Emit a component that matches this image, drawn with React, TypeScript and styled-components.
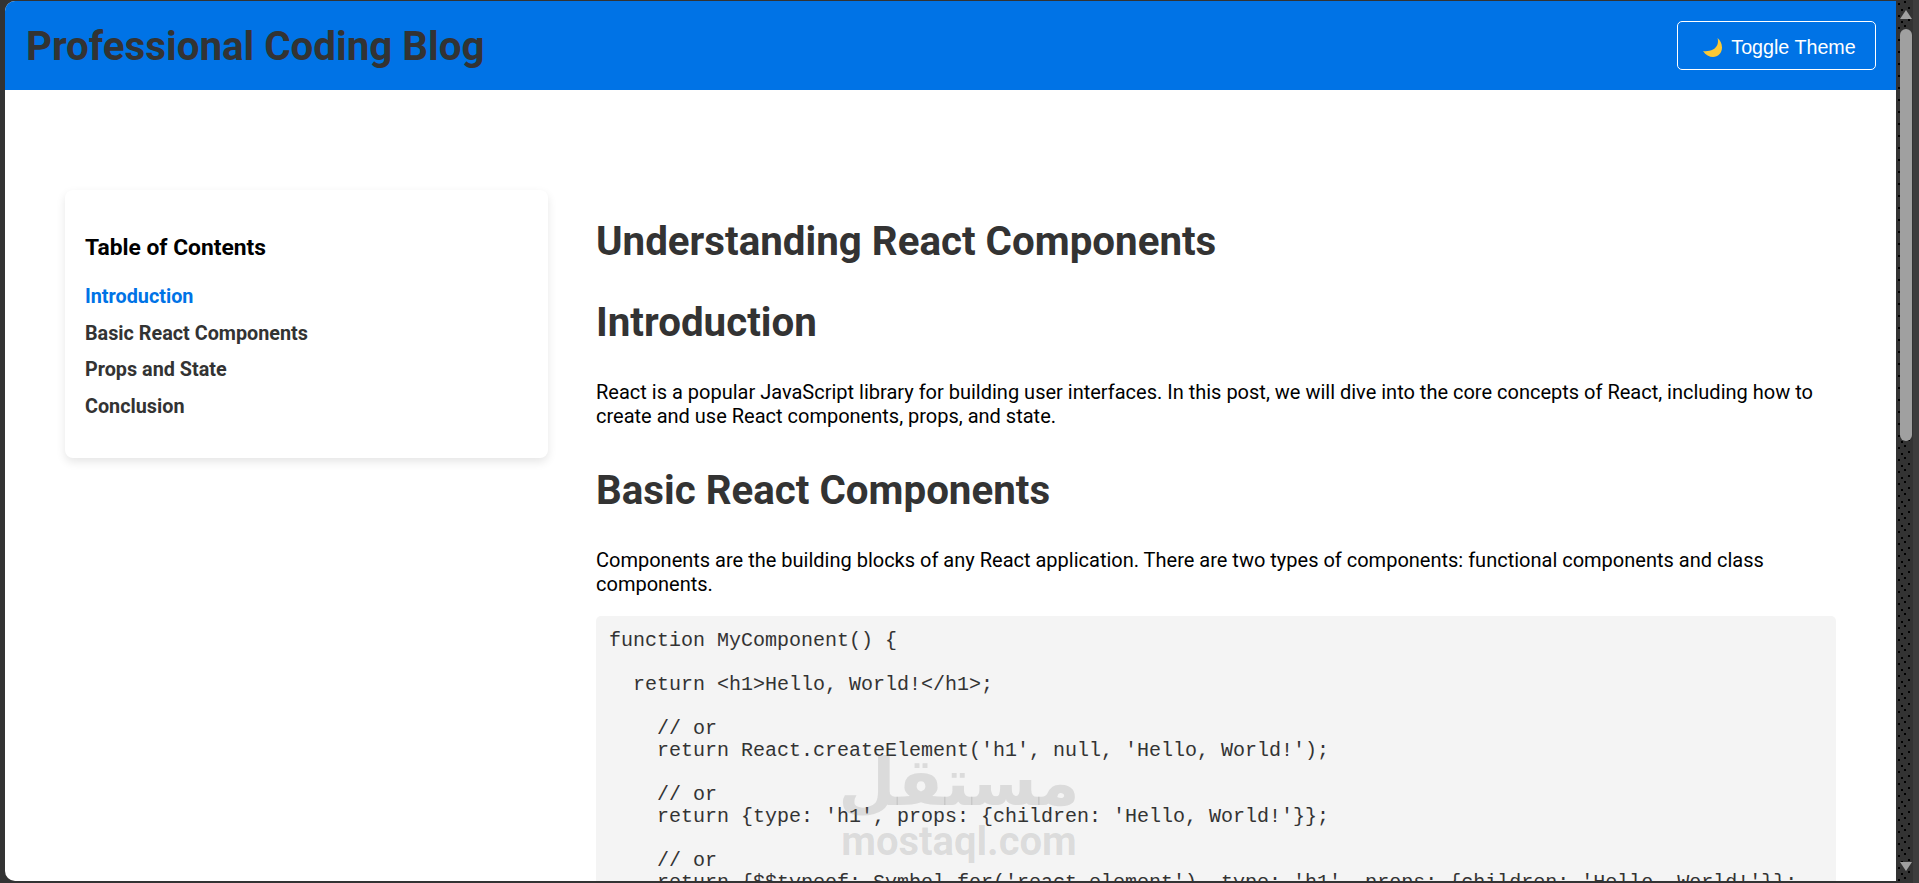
import * as React from "react";
import styled, { createGlobalStyle } from "styled-components";

const GlobalStyle = createGlobalStyle`
  html, body {
    margin: 0;
    height: 100%;
    overflow: hidden;
    background: #333;
  }
  * {
    box-sizing: border-box;
  }
`;

const Frame = styled.div`
  display: flex;
  width: 1919px;
  height: 883px;
  padding: 1px 0 2px 5px;
  background: #333;
`;

const Page = styled.div`
  position: relative;
  flex: 1;
  min-width: 0;
  background: #fff;
  border-radius: 10px 0 0 10px;
  overflow: hidden;
  font-family: Roboto, "Liberation Sans", sans-serif;
`;

const Header = styled.header`
  display: flex;
  align-items: center;
  justify-content: space-between;
  height: 89px;
  padding: 1px 20px 0 21px;
  background: #0073e6;
`;

const SiteTitle = styled.h1`
  margin: 0;
  font-size: 40.3px;
  font-weight: 700;
  color: #333;
`;

const ThemeButton = styled.button`
  display: flex;
  align-items: center;
  justify-content: center;
  gap: 9px;
  width: 199px;
  height: 49px;
  margin-top: -1px;
  padding: 4px 0 0 6px;
  border: 1px solid #fff;
  border-radius: 5px;
  background: transparent;
  color: #fff;
  font-family: "Liberation Sans", Arial, sans-serif;
  font-size: 19.7px;
`;

const Layout = styled.div`
  display: grid;
  grid-template-columns: 483px 1240px;
  column-gap: 48px;
  align-items: start;
  padding: 100px 0 0 60px;
`;

const Sidebar = styled.aside`
  padding: 20px;
  height: 268px;
  background: #fff;
  border-radius: 8px;
  box-shadow: 0 4px 10px rgba(0, 0, 0, 0.1);
`;

const SidebarTitle = styled.h3`
  margin: 25px 0 25px;
  font-size: 22.8px;
  line-height: 25px;
  font-weight: 700;
  color: #000;
`;

const TocList = styled.ul`
  margin: 0;
  padding: 0;
  list-style: none;
  display: flex;
  flex-direction: column;
`;

const TocLink = styled.a<{ $active?: boolean }>`
  display: block;
  height: 36.5px;
  font-size: 19.8px;
  line-height: 24px;
  font-weight: 700;
  text-decoration: none;
  color: ${(props) => (props.$active ? "#0073e6" : "#333")};
`;

const Article = styled.main`
  padding-top: 28px;
`;

const PostTitle = styled.h1`
  margin: 0 0 34px;
  font-size: 40.3px;
  line-height: 47px;
  font-weight: 700;
  color: #333;
`;

const SectionTitle = styled.h2`
  margin: 0 0 34px;
  font-size: 40.3px;
  line-height: 47px;
  font-weight: 700;
  color: #333;
`;

const Paragraph = styled.p`
  margin: 0 0 39px;
  font-size: 20px;
  line-height: 24px;
  color: #000;
`;

const CodeBlock = styled.pre`
  margin: -19px 0 0;
  padding: 14px 13px;
  background: #f4f4f4;
  border-radius: 5px;
  font-family: "Liberation Mono", "Courier New", monospace;
  font-size: 20px;
  line-height: 22px;
  color: #333;
`;

const Watermark = styled.div`
  position: absolute;
  left: 834px;
  top: 746px;
  width: 240px;
  display: flex;
  flex-direction: column;
  align-items: center;
  color: rgba(120, 120, 120, 0.2);
  font-weight: 700;
  pointer-events: none;
`;

const WatermarkArabic = styled.span`
  font-family: "DejaVu Sans", sans-serif;
  font-size: 66px;
  line-height: 72px;
`;

const WatermarkLatin = styled.span`
  font-family: Roboto, sans-serif;
  font-size: 40px;
  line-height: 46px;
`;

const ScrollBar = styled.div`
  position: relative;
  flex: 0 0 23px;
  display: flex;
  flex-direction: column;
  align-items: flex-start;
  padding: 10px 0 0 4px;
  margin-bottom: -2px;
  margin-top: -1px;
  background-color: #333;
  background-image:
    radial-gradient(circle at 3px 4px, #000 0.8px, transparent 1px),
    radial-gradient(circle at 9px 2px, #000 0.8px, transparent 1px),
    radial-gradient(circle at 13px 8px, #000 0.8px, transparent 1px),
    radial-gradient(circle at 6px 10px, #000 0.8px, transparent 1px);
  background-size: 17px 12px;
  background-repeat: repeat-y;
`;

const ScrollEdge = styled.div`
  position: absolute;
  top: 0;
  right: 0;
  bottom: 0;
  width: 6px;
  background: #3d3d3d;
`;

const ScrollArrow = styled.div<{ $down?: boolean }>`
  width: 12px;
  height: 9px;
  background: #a0a0a0;
  clip-path: ${(props) =>
    props.$down
      ? "polygon(0 0, 100% 0, 50% 100%)"
      : "polygon(50% 0, 100% 100%, 0 100%)"};
`;

const ScrollThumb = styled.div`
  width: 12px;
  height: 412px;
  margin-top: 10px;
  margin-bottom: 421px;
  background: #a0a0a0;
  border-radius: 6px;
`;

const Moon = () => (
  <svg width="19" height="19" viewBox="0 0 19 19">
    <path
      d="M14.500 0C16 5 14 9.500 10 11.500 7 13 3.500 13.500 0 13c2.500 4 6.500 6 10 6 5 0 9-4 9-9.500C19 5.500 17 2 14.500 0Z"
      fill="#fcc934"
    />
  </svg>
);

const code = `function MyComponent() {

  return <h1>Hello, World!</h1>;

    // or
    return React.createElement('h1', null, 'Hello, World!');

    // or
    return {type: 'h1', props: {children: 'Hello, World!'}};

    // or
    return {$$typeof: Symbol.for('react.element'), type: 'h1', props: {children: 'Hello, World!'}};
}`;

const tocItems = [
  "Introduction",
  "Basic React Components",
  "Props and State",
  "Conclusion",
];

const App = () => {
  return (
    <Frame>
      <GlobalStyle />
      <Page>
        <Header>
          <SiteTitle>Professional Coding Blog</SiteTitle>
          <ThemeButton>
            <Moon />
            Toggle Theme
          </ThemeButton>
        </Header>
        <Layout>
          <Sidebar>
            <SidebarTitle>Table of Contents</SidebarTitle>
            <TocList>
              {tocItems.map((item, index) => (
                <li key={item}>
                  <TocLink href="#" $active={index === 0}>
                    {item}
                  </TocLink>
                </li>
              ))}
            </TocList>
          </Sidebar>
          <Article>
            <PostTitle>Understanding React Components</PostTitle>
            <SectionTitle>Introduction</SectionTitle>
            <Paragraph>
              React is a popular JavaScript library for building user
              interfaces. In this post, we will dive into the core concepts of
              React, including how to create and use React components, props,
              and state.
            </Paragraph>
            <SectionTitle>Basic React Components</SectionTitle>
            <Paragraph>
              Components are the building blocks of any React application.
              There are two types of components: functional components and
              class components.
            </Paragraph>
            <CodeBlock>{code}</CodeBlock>
          </Article>
        </Layout>
        <Watermark>
          <WatermarkArabic>مستقل</WatermarkArabic>
          <WatermarkLatin>mostaql.com</WatermarkLatin>
        </Watermark>
      </Page>
      <ScrollBar>
        <ScrollEdge />
        <ScrollArrow />
        <ScrollThumb />
        <ScrollArrow $down />
      </ScrollBar>
    </Frame>
  );
};

export default App;
